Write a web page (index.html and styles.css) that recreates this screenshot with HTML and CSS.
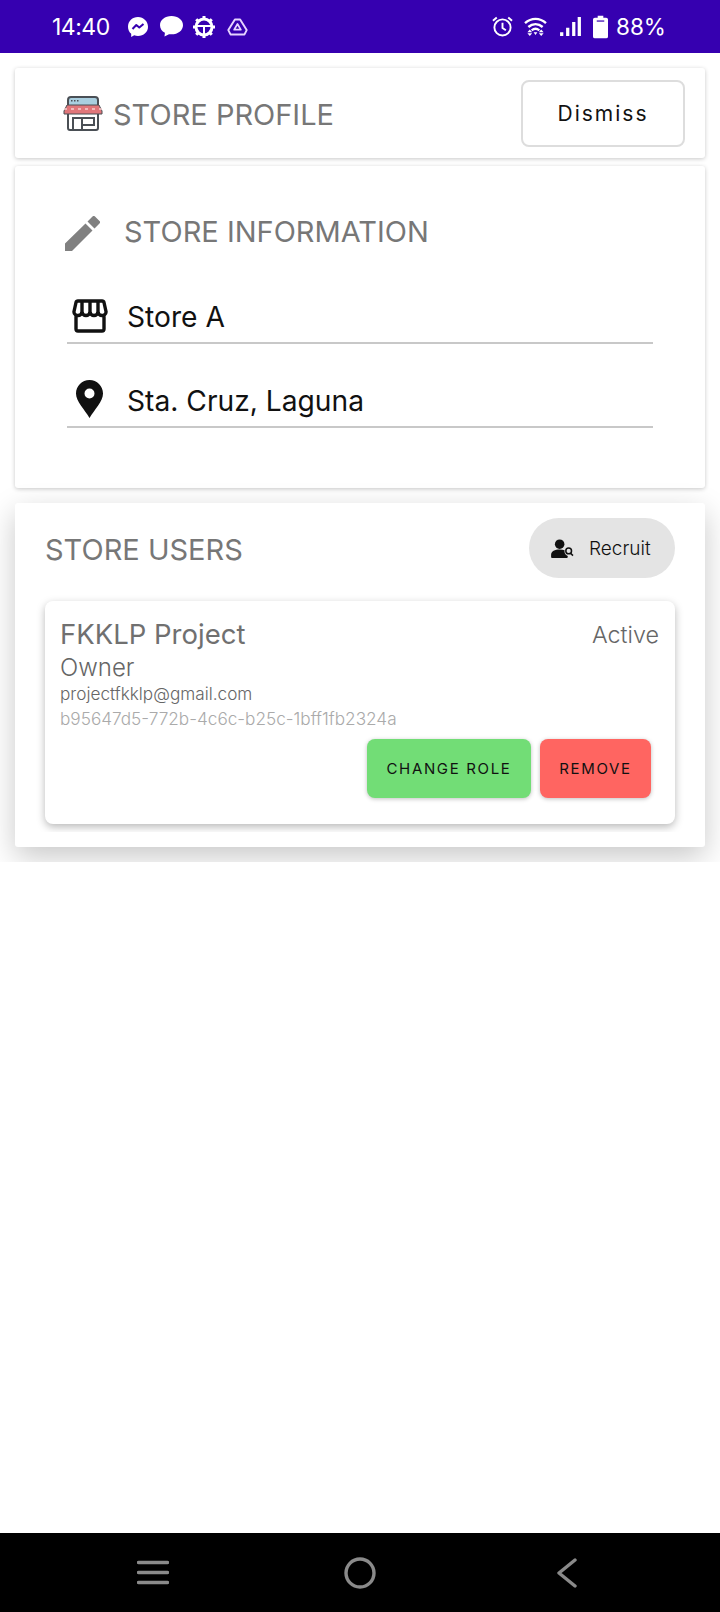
FILE: index.html
```html
<!DOCTYPE html>
<html lang="en">
<head>
<meta charset="utf-8">
<title>Store Profile</title>
<link rel="stylesheet" href="styles.css">
</head>
<body>
<header class="status">
  <div class="status-left">
    <span class="time">14:40</span>
    <svg class="si si-msg" viewBox="2 2 20 20"><path fill="#fff" d="M12 2C6.400 2 2 6.100 2 11.700c0 2.900 1.200 5.400 3.200 7.100V22l3-1.700c1.200.4 2.500.6 3.800.6 5.600 0 10-4 10-9.200S17.600 2 12 2z"/><path fill="none" stroke="#3600b0" stroke-width="2" stroke-linejoin="round" d="M6.500 14l3.800-4 3 2.500 4.200-3.500"/></svg>
    <svg class="si si-bubble" viewBox="1 2 22 20"><path fill="#fff" d="M12 2C5.700 2 1 5.800 1 10.800c0 3.100 1.800 5.700 4.700 7.200l-.4 3.600 4.300-2.300c.8.100 1.600.2 2.400.2 6.300 0 11-3.800 11-8.700S18.300 2 12 2z"/></svg>
    <svg class="si si-gear" viewBox="0 0 24 24"><circle cx="12" cy="12" r="8" fill="none" stroke="#fff" stroke-width="3"/><path fill="none" stroke="#fff" stroke-width="2" d="M5 11h14M12 11v9"/><path fill="none" stroke="#fff" stroke-width="3" d="M12 1v3M12 20v3M1 12h3M20 12h3M4.200 4.200l2.200 2.200M17.600 17.600l2.200 2.200M4.200 19.800l2.200-2.200M17.600 6.400l2.200-2.200"/></svg>
    <svg class="si si-drive" viewBox="0 2 24 20"><path fill="none" stroke="#e6d4ff" stroke-width="2.200" stroke-linejoin="round" d="M9 3.500h6l7.500 12-2.500 5H4l-2.500-5z"/><path fill="none" stroke="#e6d4ff" stroke-width="2" stroke-linejoin="round" d="M12 8.500l3.800 6.500H8.200z"/></svg>
  </div>
  <div class="status-right">
    <svg class="si si-alarm" viewBox="1 1 22 22"><circle cx="12" cy="13" r="8.500" fill="none" stroke="#fff" stroke-width="2"/><path fill="none" stroke="#fff" stroke-width="2" d="M12 8v5.500l3.500 2.500M2 6l4-3.500M22 6l-4-3.500"/></svg>
    <svg class="si si-wifi" viewBox="0 2 24 21"><path fill="none" stroke="#fff" stroke-width="2.500" d="M1 8.500c6.500-6 15.500-6 22 0M4.500 12.500c4.500-4 10.500-4 15 0M8 16c2.500-2 5.500-2 8 0"/><path fill="#fff" d="M3.500 18h5l-2.500-3zM15.500 18h5l-2.500-3zM3.500 19h5l-2.500 3zM15.500 19h5l-2.500 3zM10 18h4l-2 3z"/></svg>
    <svg class="si si-signal" viewBox="1 1.500 22.500 20.500"><path fill="#fff" d="M1 18h3.500v4H1zM7.500 13H11v9H7.500zM14 7h3.500v15H14zM20 1.500h3.500V22H20z"/></svg>
    <svg class="si si-batt" viewBox="0 0 16 24"><path fill="#fff" d="M5 0h6v2h3a2 2 0 0 1 2 2v18a2 2 0 0 1-2 2H2a2 2 0 0 1-2-2V4a2 2 0 0 1 2-2h3z"/><rect x="4" y="5" width="8" height="1.300" fill="#3600b0"/></svg>
    <span class="pct">88%</span>
  </div>
</header>

<main class="page">
  <section class="card profile">
    <div class="profile-title">
      <svg class="store-color" viewBox="0 0 40 36">
        <rect x="5" y="2" width="30" height="11" rx="3" fill="#a9cfe0" stroke="#4a4f55" stroke-width="2"/>
        <path d="M8 5.800h1.500M11 5.800h1.500M14 5.800h1.500" stroke="#4a4f55" stroke-width="1.500"/>
        <path d="M5 16h30v17a2 2 0 0 1-2 2H7a2 2 0 0 1-2-2z" fill="#fff" stroke="#4a4f55" stroke-width="2"/>
        <path d="M4 10h32l3 6v3H1v-3z" fill="#e0767a" stroke="#4a4f55" stroke-width="1"/>
        <path d="M1 14h38" stroke="#f6d0d0" stroke-width="1.500" stroke-dasharray="3 4"/>
        <path d="M10 35V23h9v12M19 23h12v7H19" fill="none" stroke="#4a4f55" stroke-width="2"/>
      </svg>
      <h1 class="heading heading-low">STORE PROFILE</h1>
    </div>
    <button class="dismiss">Dismiss</button>
  </section>

  <section class="card info">
    <div class="info-title">
      <svg class="pencil" viewBox="0 0 35 35"><path fill="#808080" d="M0 27.500L20.500 7.500l7 7L7 35H0zM22.500 5.500L27.500 0.500a1.800 1.800 0 0 1 2.500 0l4.500 4.500a1.800 1.800 0 0 1 0 2.500L29.500 12.500z"/></svg>
      <h2 class="heading">STORE INFORMATION</h2>
    </div>
    <div class="field field-first">
      <span class="field-icon">
        <svg class="store-line" viewBox="0 0 36 34"><path fill="none" stroke="#111" stroke-width="3.400" stroke-linejoin="round" stroke-linecap="round" d="M4 16v14a2 2 0 0 0 2 2h24a2 2 0 0 0 2-2V16M6 2h24a2 2 0 0 1 2 1.500l2 9c.4 3-2.500 4-4 4-2 0-4-1.500-4-4 0 2.500-2 4-4 4s-4-1.500-4-4c0 2.500-2 4-4 4s-4-1.500-4-4c0 2.500-2 4-4 4-1.500 0-4.400-1-4-4l2-9A2 2 0 0 1 6 2zM10 2v10.500M18 2v10.500M26 2v10.500"/></svg>
      </span>
      <span class="field-text">Store A</span>
    </div>
    <div class="field">
      <span class="field-icon">
        <svg class="pin" viewBox="0 0 27 38"><path fill="#111" fill-rule="evenodd" d="M13.500 0C6 0 0 6 0 13.500c0 8 8.500 16 13.500 24.500C18.500 29.500 27 21.500 27 13.500 27 6 21 0 13.500 0zm0 8.500a5 5 0 1 1 0 10 5 5 0 0 1 0-10z"/></svg>
      </span>
      <span class="field-text">Sta. Cruz, Laguna</span>
    </div>
  </section>

  <section class="card users">
    <div class="users-head">
      <h2 class="heading heading-low">STORE USERS</h2>
      <button class="recruit">
        <svg class="recruit-icon" viewBox="0 0 24 20"><circle cx="9" cy="5.500" r="5" fill="#111"/><path fill="#111" d="M0 19v-2.500C0 13 4 11 9 11c2 0 3.800.3 5.200.9-.6 2.500.8 5.200 3.300 6.100V19a1 1 0 0 1-1 1H1a1 1 0 0 1-1-1z"/><circle cx="18.500" cy="12.500" r="3" fill="none" stroke="#111" stroke-width="1.600"/><path d="M20.500 15l2.500 2.500" stroke="#111" stroke-width="1.600"/></svg>
        <span>Recruit</span>
      </button>
    </div>
    <div class="user-clip">
      <article class="user">
        <div class="user-top">
          <div class="user-name">FKKLP Project</div>
          <div class="user-status">Active</div>
        </div>
        <div class="user-role">Owner</div>
        <div class="user-email">projectfkklp@gmail.com</div>
        <div class="user-id">b95647d5-772b-4c6c-b25c-1bff1fb2324a</div>
        <div class="user-actions">
          <button class="action action-green">CHANGE ROLE</button>
          <button class="action action-red">REMOVE</button>
        </div>
      </article>
    </div>
  </section>
</main>

<div class="blank"></div>

<nav class="navbar">
  <svg class="nav-menu" viewBox="0 0 32 25"><path d="M1.500 2.500h29M1.500 12.500h29M1.500 22.500h29" stroke="#8a8a8a" stroke-width="3.400" stroke-linecap="round"/></svg>
  <svg class="nav-home" viewBox="0 0 32 32"><circle cx="16" cy="16" r="14" fill="none" stroke="#8a8a8a" stroke-width="3.400"/></svg>
  <svg class="nav-back" viewBox="0 0 20 30"><path d="M18 2L2 15l16 13" fill="none" stroke="#8a8a8a" stroke-width="3.400" stroke-linecap="round" stroke-linejoin="round"/></svg>
</nav>
</body>
</html>
```

FILE: styles.css
```css
* { box-sizing: border-box; }
html, body { margin: 0; height: 100%; }
body {
  width: 720px;
  height: 1612px;
  display: flex;
  flex-direction: column;
  background: #fff;
  font-family: Inter, "Liberation Sans", sans-serif;
  color: #111;
  overflow: hidden;
}
button { font-family: inherit; cursor: pointer; }
h1, h2 { margin: 0; }

.status {
  height: 53px;
  flex: none;
  background: #3600b0;
  color: #fff;
  display: flex;
  justify-content: space-between;
  align-items: center;
  padding: 0 55px 0 52px;
}
.status-left, .status-right { display: flex; align-items: center; }
.time { font-size: 23px; letter-spacing: -.5px; width: 76px; }
.pct { font-size: 22.500px; margin-left: 8px; width: 49px; white-space: nowrap; }
.si { display: block; flex: none; }
.si-msg { width: 20px; height: 20px; margin-right: 12px; }
.si-bubble { width: 23px; height: 21px; margin-right: 9px; }
.si-gear { width: 24px; height: 24px; margin-right: 11px; }
.si-drive { width: 21px; height: 18px; }
.si-alarm { width: 21px; height: 21px; margin-right: 11px; }
.si-wifi { width: 23px; height: 20px; margin-right: 13px; }
.si-signal { width: 21px; height: 19px; margin-right: 12px; }
.si-batt { width: 15px; height: 24px; }

.page {
  height: 809px;
  flex: none;
  padding: 15px 15px 0;
  overflow: hidden;
}
.card {
  background: #fff;
  border-radius: 3px;
  box-shadow: 0 1px 4px rgba(0, 0, 0, .22);
}
.heading {
  font-size: 29px;
  font-weight: 400;
  color: #777;
  line-height: 34px;
}
.heading-low { padding-top: 3px; }

.profile {
  height: 90px;
  display: flex;
  align-items: center;
  justify-content: space-between;
  padding: 0 20px 0 48px;
}
.profile-title { display: flex; align-items: center; gap: 10px; }
.store-color { width: 40px; height: 36px; display: block; }
.dismiss {
  width: 164px;
  height: 67px;
  background: #fff;
  border: 2px solid #ddd;
  border-radius: 8px;
  font-size: 21px;
  letter-spacing: 2px;
  color: #111;
}

.info {
  height: 322px;
  margin-top: 8px;
  padding: 48px 52px 0;
}
.info-title { display: flex; align-items: center; gap: 24px; margin-left: -2px; height: 36px; }
.pencil { width: 35px; height: 35px; display: block; margin-top: 2px; }
.field {
  height: 84px;
  display: flex;
  align-items: flex-end;
  padding-bottom: 6px;
  border-bottom: 2px solid #c8c8c8;
}
.field-first { height: 94px; }
.field-icon {
  width: 60px;
  display: flex;
  justify-content: center;
  padding-right: 15px;
  margin-bottom: 3px;
  flex: none;
}
.store-line { width: 36px; height: 34px; display: block; }
.pin { width: 27px; height: 38px; display: block; margin-bottom: -1px; }
.field-text { font-size: 28.200px; line-height: 38px; color: #111; }

.users {
  height: 344px;
  margin-top: 15px;
  padding: 15px 0 0;
  box-shadow: 0 10px 30px rgba(0, 0, 0, .22);
}
.users-head {
  display: flex;
  justify-content: space-between;
  align-items: center;
  padding: 0 30px;
}
.recruit {
  width: 146px;
  height: 60px;
  border: 0;
  border-radius: 30px;
  background: #e4e4e4;
  display: flex;
  align-items: center;
  gap: 15px;
  padding: 0 0 0 22px;
  font-size: 19px;
  font-weight: 300;
  color: #111;
}
.recruit-icon { width: 23px; height: 19px; display: block; }
.user-clip {
  padding: 23px 30px 8px;
  overflow: hidden;
}
.user {
  height: 223px;
  background: #fff;
  border-radius: 8px;
  box-shadow: 0 3px 8px rgba(0, 0, 0, .28);
  padding: 16px 16px 0 15px;
}
.user-top { display: flex; justify-content: space-between; align-items: center; }
.user-name { font-size: 27.500px; line-height: 34px; color: #707070; }
.user-status { font-size: 23.300px; font-weight: 300; color: #666; }
.user-role { font-size: 24px; font-weight: 300; line-height: 32px; margin-top: 1px; color: #666; }
.user-email { font-size: 17.200px; font-weight: 300; line-height: 20px; color: #666; }
.user-id { font-size: 17.200px; font-weight: 300; line-height: 22px; margin-top: 4px; color: #aaa; }
.user-actions {
  display: flex;
  justify-content: flex-end;
  gap: 9px;
  margin-top: 9px;
  padding-right: 8px;
}
.action {
  height: 59px;
  border: 0;
  border-radius: 8px;
  font-size: 15px;
  letter-spacing: 1.650px;
  color: #111;
  box-shadow: 0 1px 4px rgba(0, 0, 0, .25);
}
.action-green { width: 164px; background: #72dd76; }
.action-red { width: 111px; background: #ff6561; }

.blank { flex: 1; }
.navbar {
  height: 79px;
  flex: none;
  background: #000;
  display: flex;
  align-items: center;
  padding-left: 137px;
}
.nav-menu { width: 32px; height: 25px; }
.nav-home { width: 32px; height: 32px; margin-left: 175px; }
.nav-back { width: 20px; height: 30px; margin-left: 181px; }
```
